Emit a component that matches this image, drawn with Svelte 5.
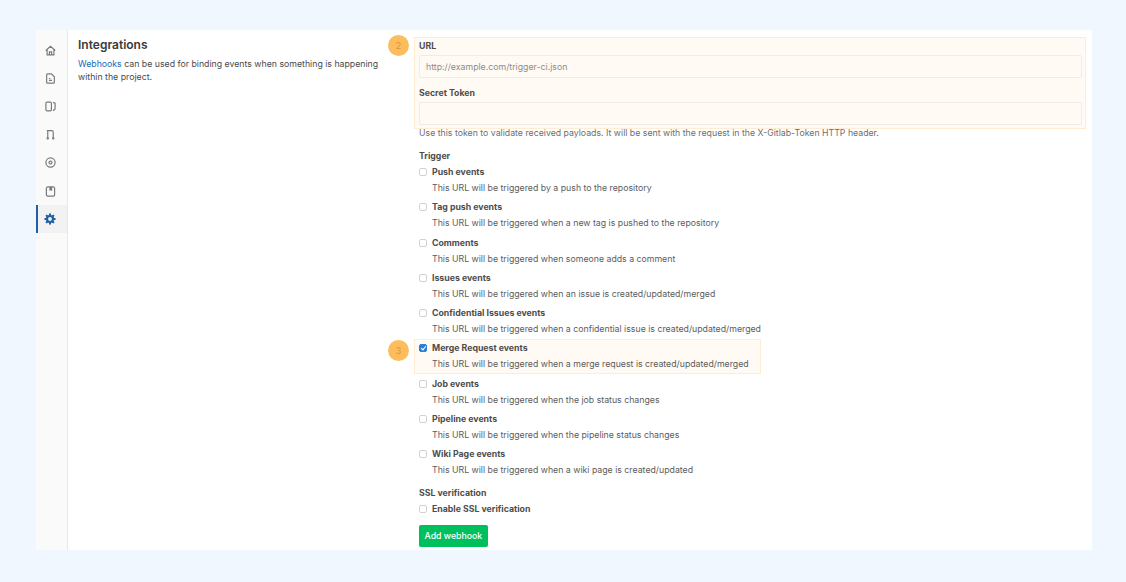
<script>
  const triggers = [
    { name: "Push events", desc: "This URL will be triggered by a push to the repository" },
    { name: "Tag push events", desc: "This URL will be triggered when a new tag is pushed to the repository" },
    { name: "Comments", desc: "This URL will be triggered when someone adds a comment" },
    { name: "Issues events", desc: "This URL will be triggered when an issue is created/updated/merged" },
    { name: "Confidential Issues events", desc: "This URL will be triggered when a confidential issue is created/updated/merged" },
    { name: "Merge Request events", desc: "This URL will be triggered when a merge request is created/updated/merged", checked: true, mark: 3 },
    { name: "Job events", desc: "This URL will be triggered when the job status changes" },
    { name: "Pipeline events", desc: "This URL will be triggered when the pipeline status changes" },
    { name: "Wiki Page events", desc: "This URL will be triggered when a wiki page is created/updated" },
  ];
</script>

<div class="page">
  <div class="card">
    <nav class="rail">
      <div class="rail-item">
        <svg viewBox="0 0 12 12"><path d="M.8 6 6 1.300 11.200 6M2.300 5v5.700h7.400V5M4.800 10.700V7.500h2.400v3.200" /></svg>
      </div>
      <div class="rail-item">
        <svg viewBox="0 0 12 12"><path d="M1.800 2a1 1 0 0 1 1-1h4.200l3.200 3.200V10a1 1 0 0 1-1 1H2.800a1 1 0 0 1-1-1zM4.300 8h3.400M4.300 6h1.500" /></svg>
      </div>
      <div class="rail-item">
        <svg viewBox="0 0 12 12"><rect x="1" y="1.200" width="6" height="9.600" rx="1.200" /><path d="M8.800 1.500 11 2.300v6.400l-2.200 2" /></svg>
      </div>
      <div class="rail-item">
        <svg viewBox="0 0 12 12"><path d="M3 1.500v7.500M2 1.700h5.500a1.500 1.500 0 0 1 1.500 1.500V9" /><circle cx="3" cy="10.200" r=".7" /><circle cx="9" cy="10.200" r=".7" /></svg>
      </div>
      <div class="rail-item">
        <svg viewBox="0 0 12 12"><circle cx="6" cy="6" r="5" /><circle cx="6" cy="6" r="1.600" /></svg>
      </div>
      <div class="rail-item">
        <svg viewBox="0 0 12 12"><rect x="1.500" y="1" width="9" height="10" rx="1.500" /><path class="solid" d="M4.800 1h3v4.500L6.300 4.500 4.800 5.500z" /></svg>
      </div>
      <div class="rail-item active">
        <svg viewBox="0 0 12 12"><circle class="gear" cx="6" cy="6" r="3" /><path class="teeth" d="M6 .5v2M6 9.500v2M.5 6h2M9.500 6h2M2.100 2.100l1.400 1.400M8.500 8.500l1.400 1.400M9.900 2.100 8.500 3.500M3.500 8.500 2.100 9.900" /></svg>
      </div>
    </nav>

    <main class="content">
      <section class="intro">
        <h2>Integrations</h2>
        <p><a href="#webhooks">Webhooks</a> can be used for binding events when something is happening within the project.</p>
      </section>

      <form class="form" onsubmit={(e) => e.preventDefault()}>
        <div class="marked fields">
          <span class="badge">2</span>
          <label class="title" for="url">URL</label>
          <input id="url" type="text" placeholder="http://example.com/trigger-ci.json" />
          <label class="title token" for="token">Secret Token</label>
          <input id="token" type="text" />
        </div>
        <p class="help">Use this token to validate received payloads. It will be sent with the request in the X-Gitlab-Token HTTP header.</p>

        <div class="title trigger">Trigger</div>
        <div class="triggers">
          {#each triggers as t}
            <div class="check" class:marked={t.mark}>
              {#if t.mark}<span class="badge">{t.mark}</span>{/if}
              <input type="checkbox" checked={t.checked} />
              <div>
                <div class="name">{t.name}</div>
                <div class="desc">{t.desc}</div>
              </div>
            </div>
          {/each}
        </div>

        <div class="title ssl">SSL verification</div>
        <div class="check">
          <input type="checkbox" />
          <div class="name">Enable SSL verification</div>
        </div>
        <button type="submit">Add webhook</button>
      </form>
    </main>
  </div>
</div>

<style>
  :global(body) {
    background: #f0f7fe;
  }
  .page {
    padding: 30px 34px 32px 36px;
    font-family: Inter, "Liberation Sans", sans-serif;
    font-size: 8.750px;
    color: #4d4d4d;
  }
  .card {
    display: flex;
    height: 520px;
    background: #fff;
    overflow: hidden;
  }
  .rail {
    width: 31px;
    flex: none;
    display: flex;
    flex-direction: column;
    background: #fafafa;
    border-right: 1px solid #e8e8e8;
    padding-top: 6px;
  }
  .rail-item {
    height: 28.200px;
    display: flex;
    align-items: center;
    justify-content: center;
    padding-right: 3px;
  }
  .rail-item svg {
    width: 11px;
    height: 11px;
    fill: none;
    stroke: #7a7a7a;
    stroke-width: 1.300;
  }
  .rail-item svg .solid {
    fill: #7a7a7a;
    stroke: none;
  }
  .rail-item.active {
    background: #f2f2f2;
    box-shadow: inset 2px 0 0 #1f5fa3;
  }
  .rail-item.active svg {
    width: 12px;
    height: 12px;
  }
  .rail-item.active svg .gear {
    stroke: #1f5fa3;
    stroke-width: 2.200;
    fill: #f2f2f2;
  }
  .rail-item.active svg .teeth {
    stroke: #1f5fa3;
    stroke-width: 2;
  }
  .content {
    flex: 1;
    display: flex;
    padding: 8px 10px 0 10px;
    min-width: 0;
  }
  .intro {
    width: 341px;
    flex: none;
    padding-right: 40px;
    box-sizing: border-box;
  }
  h2 {
    margin: 0 0 6px;
    font-size: 12px;
    line-height: 14px;
    font-weight: 600;
    color: #3a3a3a;
  }
  .intro p {
    margin: 0;
    line-height: 13px;
    color: #4a4a4a;
  }
  a {
    color: #1b69b6;
    text-decoration: none;
  }
  .form {
    flex: 1;
    min-width: 0;
    display: flex;
    flex-direction: column;
    align-items: flex-start;
  }
  .title {
    display: block;
    font-weight: 700;
    color: #4d4d4d;
    line-height: 14px;
  }
  .marked {
    position: relative;
    background: #fffaf4;
    box-shadow: 0 0 0 1px #feecd3;
  }
  .fields {
    align-self: stretch;
    margin: 0 -3px 0 -4px;
    padding: 1px 3px 3px 4px;
    height: 90px;
    box-sizing: border-box;
  }
  .fields input {
    display: block;
    width: 100%;
    height: 23px;
    box-sizing: border-box;
    margin-top: 2px;
    padding: 0 6px;
    font: inherit;
    background: transparent;
    border: 1px solid #f0ede8;
    border-radius: 2px;
  }
  .fields input::placeholder {
    color: #8c8c8c;
  }
  .token {
    margin-top: 8px;
  }
  .badge {
    position: absolute;
    left: -27px;
    top: -3px;
    width: 21px;
    height: 21px;
    border-radius: 50%;
    background: #fdbd5c;
    color: #e0953a;
    font-size: 9.500px;
    display: flex;
    align-items: center;
    justify-content: center;
  }
  .help {
    margin: -1px 0 0;
    line-height: 13px;
    color: #6e6e6e;
  }
  .trigger {
    margin-top: 9px;
  }
  .triggers {
    display: flex;
    flex-direction: column;
    margin-top: 2px;
  }
  .check {
    display: flex;
    gap: 5px;
    height: 35.250px;
    box-sizing: border-box;
  }
  .check.marked {
    margin-left: -4px;
    padding-left: 4px;
    padding-right: 11px;
    width: fit-content;
    height: 33px;
    margin-top: -1px;
    margin-bottom: 3.250px;
    padding-top: 1px;
  }
  .check.marked .badge {
    top: 0;
  }
  .check input {
    appearance: none;
    position: relative;
    width: 8px;
    height: 8px;
    margin: 3px 0 0;
    flex: none;
    border: 1px solid #d2d2d2;
    border-radius: 2px;
    background: #fff;
  }
  .check input:checked {
    background: #2d7fd6;
    border-color: #2d7fd6;
  }
  .check input:checked::after {
    content: "";
    position: absolute;
    left: 1.500px;
    top: 0;
    width: 2px;
    height: 4px;
    border: solid #fff;
    border-width: 0 1px 1px 0;
    transform: rotate(40deg);
  }
  .name {
    font-weight: 700;
    color: #4d4d4d;
    line-height: 14px;
  }
  .desc {
    margin-top: 2px;
    line-height: 14px;
    color: #5c5c5c;
  }
  .ssl {
    margin-top: 4px;
  }
  .form > .check {
    height: auto;
    margin-top: 2px;
  }
  button {
    margin-top: 9px;
    height: 22px;
    padding: 0 6px;
    margin-left: -0.500px;
    font: inherit;
    font-weight: 500;
    color: #fff;
    background: #00bf5d;
    border: none;
    border-radius: 2px;
  }
</style>
